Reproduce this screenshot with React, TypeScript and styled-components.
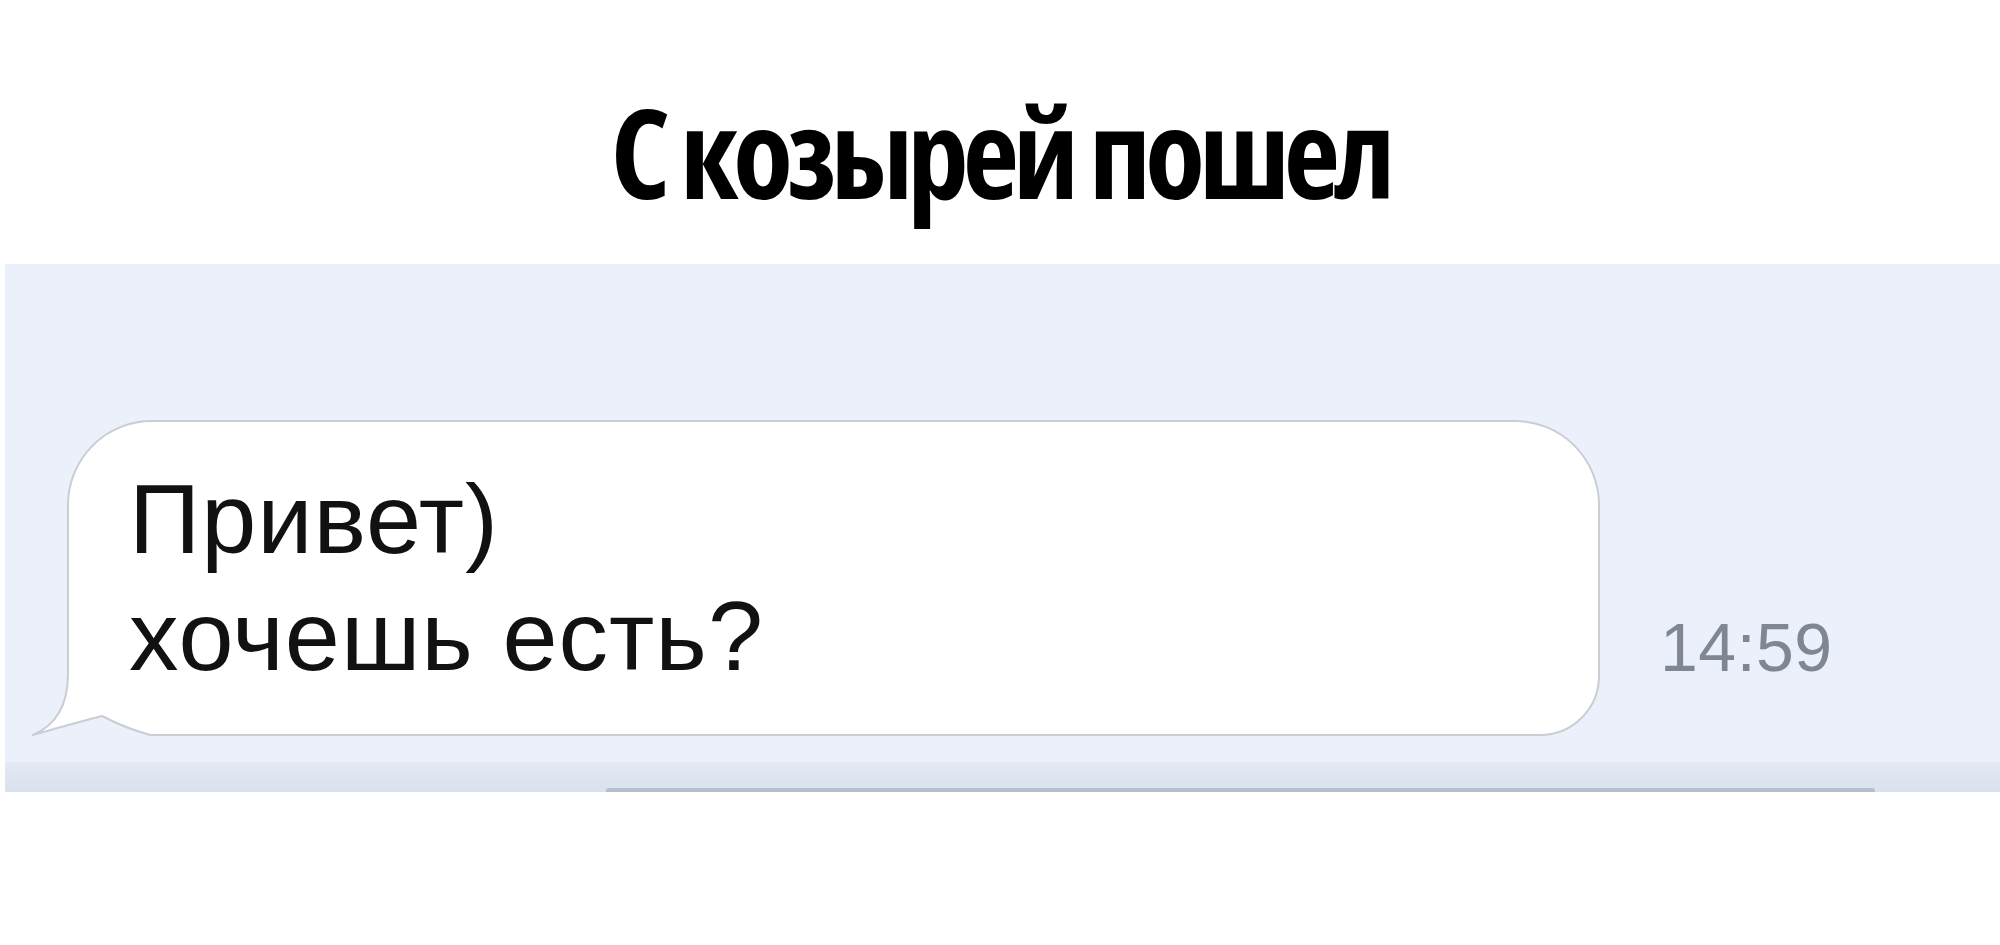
import React from 'react';
import styled, { createGlobalStyle } from 'styled-components';

const PANEL_BG = '#ebf0fa';
const BUBBLE_BORDER = '#c9cdd4';

const GlobalStyle = createGlobalStyle`
  html, body {
    margin: 0;
    padding: 0;
    background: #ffffff;
  }
  body {
    -webkit-font-smoothing: antialiased;
  }
`;

const Page = styled.main`
  display: flex;
  flex-direction: column;
  width: 2000px;
  min-height: 945px;
  background: #fff;
`;

const Title = styled.h1`
  margin: 90px 0 0;
  font-family: 'Open Sans', 'DejaVu Sans Condensed', sans-serif;
  font-stretch: 75%;
  font-weight: 700;
  font-size: 123px;
  line-height: 1;
  letter-spacing: -6px;
  color: #000;
  text-align: center;
`;

const Chat = styled.section`
  display: flex;
  flex-direction: column;
  margin: 51px 0 0 5px;
  background: ${PANEL_BG};
`;

const MessageRow = styled.div`
  display: flex;
  align-items: flex-end;
  gap: 60px;
  padding: 156px 0 26px 62px;
`;

const Bubble = styled.div`
  position: relative;
  box-sizing: border-box;
  width: 1533px;
  padding: 38px 0 40px 60px;
  background: #fff;
  border: 2px solid ${BUBBLE_BORDER};
  border-radius: 85px 85px 60px 0;
  font-family: 'Liberation Sans', Arial, sans-serif;
  font-size: 99px;
  line-height: 117px;
  letter-spacing: 1px;
  color: #111;
`;

const Line = styled.div`
  position: relative;
  z-index: 1;
  white-space: nowrap;
`;

const Tail = styled.svg`
  position: absolute;
  left: -40px;
  bottom: -2px;
  width: 130px;
  height: 110px;
  overflow: visible;
`;

const Time = styled.span`
  margin-bottom: 55px;
  font-family: 'Liberation Sans', Arial, sans-serif;
  font-size: 68px;
  line-height: 1;
  letter-spacing: 0.5px;
  color: #7f8795;
`;

const Composer = styled.div`
  display: flex;
  align-items: flex-end;
  height: 30px;
  padding-left: 601px;
  background: linear-gradient(#e4eaf4, #d9e1ed);
`;

const Field = styled.div`
  width: 1269px;
  height: 4px;
  border-radius: 3px 3px 0 0;
  background: #b3bfd0;
`;

function BubbleTail() {
  return (
    <Tail viewBox="0 0 130 110">
      <path d="M39 0 L39 48 Q39 94 4 109 Q42 98 73 90 Q96 102 121 109 L130 109 L130 0 Z" fill="#fff" />
      <path d="M4 109 Q42 98 73 90 Q96 102 121 109 L130 109 L130 111 L4 111 Z" fill={PANEL_BG} />
      <path
        d="M39 0 L39 48 Q39 94 4 109 Q42 98 73 90 Q96 102 121 109 L130 109"
        fill="none"
        stroke={BUBBLE_BORDER}
        strokeWidth={2}
        strokeLinejoin="round"
      />
    </Tail>
  );
}

export default function App() {
  return (
    <Page>
      <GlobalStyle />
      <Title>С козырей пошел</Title>
      <Chat>
        <MessageRow>
          <Bubble>
            <BubbleTail />
            <Line>Привет)</Line>
            <Line>хочешь есть?</Line>
          </Bubble>
          <Time>14:59</Time>
        </MessageRow>
        <Composer>
          <Field />
        </Composer>
      </Chat>
    </Page>
  );
}
